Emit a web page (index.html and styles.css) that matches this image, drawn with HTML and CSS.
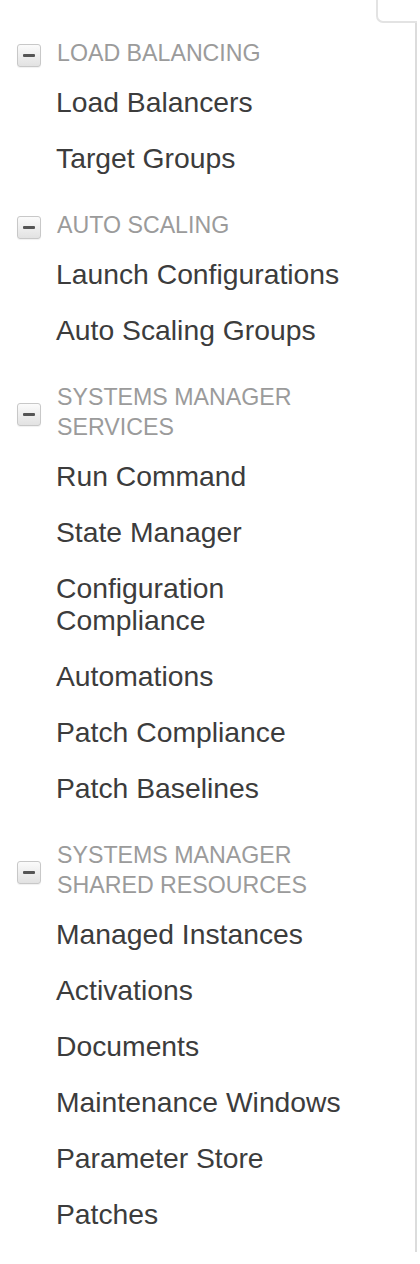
FILE: index.html
```html
<!DOCTYPE html>
<html>
<head>
<meta charset="utf-8">
<link rel="stylesheet" href="styles.css">
</head>
<body>
<div class="tab"></div>
<nav class="nav">
  <section class="group">
    <div class="group-head">
      <span class="toggle"><span class="bar"></span></span>
      <span class="group-title">Load Balancing</span>
    </div>
    <ul class="items">
      <li class="item">Load Balancers</li>
      <li class="item">Target Groups</li>
    </ul>
  </section>
  <section class="group">
    <div class="group-head">
      <span class="toggle"><span class="bar"></span></span>
      <span class="group-title">Auto Scaling</span>
    </div>
    <ul class="items">
      <li class="item">Launch Configurations</li>
      <li class="item">Auto Scaling Groups</li>
    </ul>
  </section>
  <section class="group">
    <div class="group-head">
      <span class="toggle"><span class="bar"></span></span>
      <span class="group-title">Systems Manager Services</span>
    </div>
    <ul class="items">
      <li class="item">Run Command</li>
      <li class="item">State Manager</li>
      <li class="item">Configuration Compliance</li>
      <li class="item">Automations</li>
      <li class="item">Patch Compliance</li>
      <li class="item">Patch Baselines</li>
    </ul>
  </section>
  <section class="group">
    <div class="group-head">
      <span class="toggle"><span class="bar"></span></span>
      <span class="group-title">Systems Manager Shared Resources</span>
    </div>
    <ul class="items">
      <li class="item">Managed Instances</li>
      <li class="item">Activations</li>
      <li class="item">Documents</li>
      <li class="item">Maintenance Windows</li>
      <li class="item">Parameter Store</li>
      <li class="item">Patches</li>
    </ul>
  </section>
</nav>
</body>
</html>
```
FILE: styles.css
```css
html, body {
  margin: 0;
  padding: 0;
  background: #fff;
}
body {
  font-family: "Liberation Sans", Arial, Helvetica, sans-serif;
  width: 420px;
}
.tab {
  margin-left: 376px;
  width: 39px;
  height: 21px;
  border-left: 2px solid #e3e3e3;
  border-bottom: 2px solid #e3e3e3;
  border-bottom-left-radius: 7px;
}
.nav {
  width: 415px;
  border-right: 2px solid #dcdcdc;
  padding: 15px 0 10px 0;
  box-sizing: content-box;
}
.group + .group {
  margin-top: 24px;
}
.group-head {
  display: flex;
  align-items: center;
  padding-left: 17px;
}
.toggle {
  flex: none;
  width: 22px;
  height: 21px;
  border: 1px solid #c8c8c8;
  border-radius: 3px;
  background: linear-gradient(#fbfbfb, #e2e2e2);
  display: flex;
  align-items: center;
  justify-content: center;
  margin-top: 5px;
  box-shadow: 0 1px 1px rgba(0,0,0,0.06);
}
.bar {
  width: 12px;
  height: 3px;
  background: #555;
  border-radius: 1px;
}
.group-title {
  margin-left: 16px;
  font-size: 23.2px;
  line-height: 30px;
  color: #9b9b9b;
  text-transform: uppercase;
  max-width: 300px;
}
.items {
  list-style: none;
  margin: 6px 0 0 0;
  padding: 0;
}
.item {
  padding: 12px 50px 12px 56px;
  font-size: 28.3px;
  line-height: 32px;
  color: #3c3c3c;
}
```
